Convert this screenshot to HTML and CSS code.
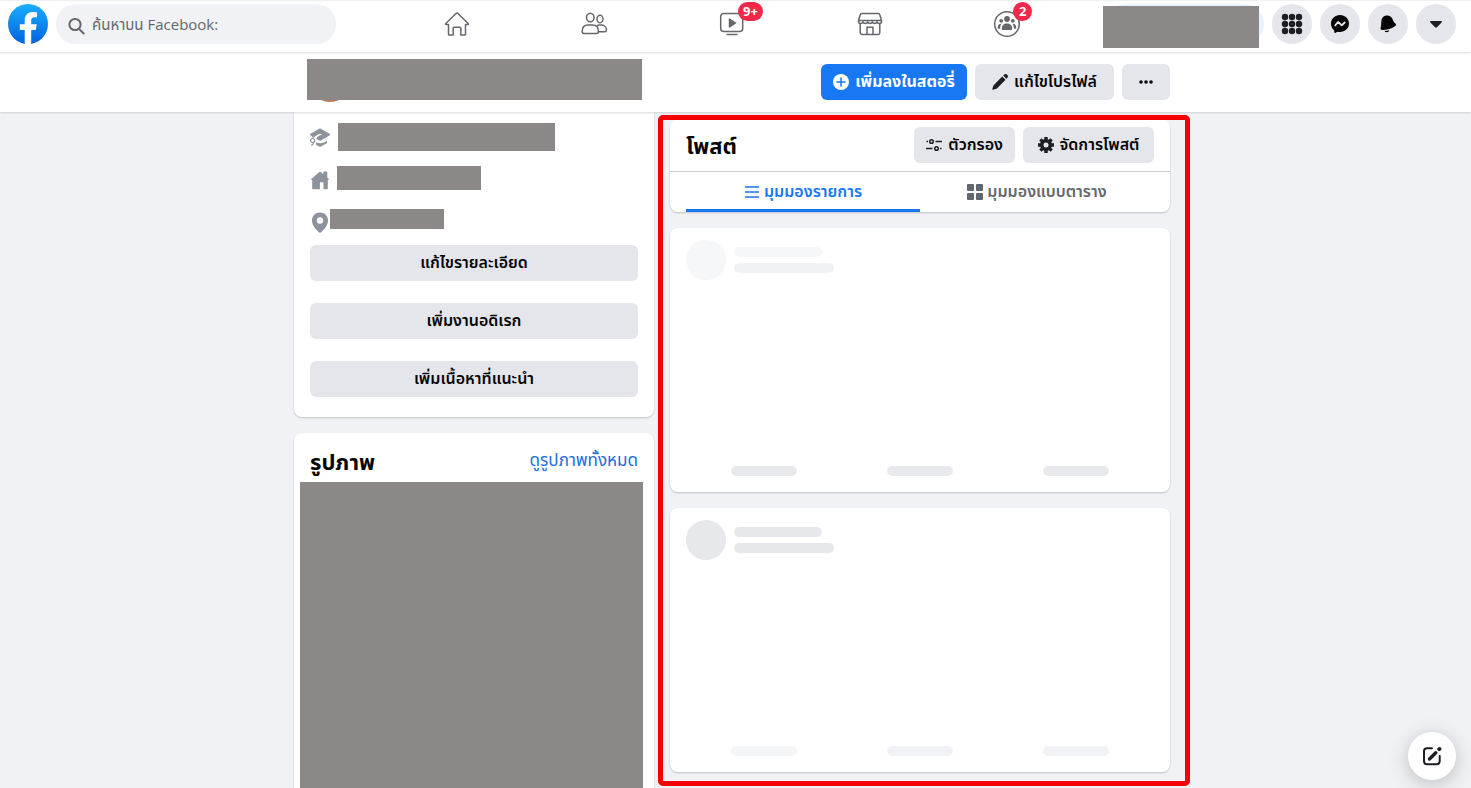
FILE: index.html
```
<!DOCTYPE html>
<html lang="th">
  <head>
    <meta charset="utf-8">
    <title>Facebook</title>
    <link rel="stylesheet" href="styles.css">
  </head>
  <body>
    <header class="topbar">
      <div class="topbar-left">
        <a class="logo" href="#" aria-label="Facebook">
          <svg width="40" height="40" viewBox="0 0 40 40">
            <defs>
              <linearGradient id="blue" x1="0" y1="0" x2="0" y2="1">
                <stop offset="0" stop-color="#19afff"/>
                <stop offset="1" stop-color="#0062e0"/>
              </linearGradient>
            </defs>
            <circle cx="20" cy="20" r="20" fill="url(#blue)"/>
            <path fill="#fff" d="M16.7 39.8V26h-4.9v-5.800h4.900v-3.600C16.700 11 19.800 8 24.700 8c1.600 0 3 .1 4.300.4v4.900h-2.500c-2.500 0-3.300 1.400-3.300 3.200v3.700h5.600L27.700 26h-4.500v13.800c-2.100.3-4.400.3-6.500 0z"/>
          </svg>
        </a>
        <label class="search">
          <svg width="18" height="18" viewBox="0 0 18 18" fill="none" stroke="#65676b" stroke-width="2">
            <circle cx="7" cy="7.500" r="5.600"/>
            <path d="M11.200 12l4.500 4.500" stroke-linecap="round"/>
          </svg>
          <input type="text" aria-label="ค้นหา" placeholder="ค้นหาบน Facebook:">
        </label>
      </div>
      <nav class="tabs-main">
        <a href="#" aria-label="Home">
          <svg width="28" height="28" viewBox="0 0 28 28" class="line">
            <path d="M5.500 14.500H3.200c-.8 0-.9-.6-.4-1L13 3.500c.6-.6 1.400-.6 2 0l10.200 10c.5.4.4 1-.4 1h-2.300v9.800c0 .5-.3.800-.8.800h-3.900v-7c0-.5-.3-.8-.8-.8h-6c-.5 0-.8.3-.8.8v7H6.300c-.5 0-.8-.3-.8-.8z"/>
          </svg>
        </a>
        <a href="#" aria-label="Friends">
          <svg width="28" height="28" viewBox="0 0 28 28" class="line">
            <ellipse cx="10.300" cy="7.500" rx="3.800" ry="4.300"/>
            <ellipse cx="20" cy="9" rx="3" ry="3.700"/>
            <path d="M2.200 21.500c0-4.400 2.700-6.500 5.800-6.500h4.600c3.100 0 5.800 2.100 5.800 6.500 0 1.200-.7 1.900-1.700 1.900H3.900c-1 0-1.700-.7-1.700-1.900z"/>
            <path d="M16.800 15.700c.8-.4 1.600-.6 2.500-.6h1.800c2.800 0 5.300 1.800 5.300 4.800 0 1.200-.6 1.800-1.600 1.800h-6.300"/>
          </svg>
        </a>
        <a href="#" aria-label="Watch">
          <svg width="28" height="28" viewBox="0 0 28 28" class="line">
            <rect x="2.700" y="3.500" width="22" height="18" rx="3"/>
            <path d="M8.500 24.500h11"/>
            <path d="M11.500 9v8l6-4z" fill="#65676b"/>
          </svg>
          <span class="badge">9+</span>
        </a>
        <a href="#" aria-label="Marketplace">
          <svg width="28" height="28" viewBox="0 0 28 28" class="line">
            <path d="M2.500 10.500l1.700-5.800c.2-.8.8-1.200 1.600-1.200h16.400c.8 0 1.400.4 1.600 1.200l1.700 5.800H2.500v1c0 2.600 3.800 2.600 4.600.4.800 2.200 3.800 2.200 4.600 0 .8 2.200 3.800 2.200 4.600 0 .8 2.200 3.800 2.200 4.600 0 .8 2.200 4.600 2.200 4.600-.4v-1"/>
            <path d="M4.200 13.500v9.300c0 1 .7 1.700 1.700 1.700h16.200c1 0 1.700-.7 1.700-1.700v-9.300M11 24.500v-7.200h6v7.200"/>
          </svg>
        </a>
        <a href="#" aria-label="Groups">
          <svg width="28" height="28" viewBox="0 0 28 28" class="line">
            <circle cx="14" cy="14" r="12.300"/>
            <g fill="#65676b" stroke="none">
              <circle cx="14" cy="9" r="2.900"/>
              <circle cx="8.200" cy="10.800" r="1.900"/>
              <circle cx="19.800" cy="10.800" r="1.900"/>
              <path d="M8.800 18.800c0-3.200 1.800-5.300 5.200-5.300s5.200 2.100 5.200 5.300c0 .8-.5 1.200-1.200 1.200h-8c-.7 0-1.200-.4-1.200-1.200zM8.500 13.800c-1 1.300-1.400 3-1.400 4.900H5.600c-.6 0-.9-.3-.9-.9 0-2.500 1.200-4.300 3.800-4zM19.500 13.800c1 1.300 1.400 3 1.400 4.900h1.500c.6 0 .9-.3.9-.9 0-2.500-1.200-4.300-3.800-4z"/>
            </g>
          </svg>
          <span class="badge">2</span>
        </a>
      </nav>
      <div class="topbar-right">
        <a class="me" href="#" aria-label="Profile"><span class="mask"></span></a>
        <button class="round" aria-label="Menu">
          <svg width="20" height="20" viewBox="0 0 20 20" fill="#1c1e21">
            <circle cx="3" cy="3" r="3.200"/><circle cx="10" cy="3" r="3.200"/><circle cx="17" cy="3" r="3.200"/>
            <circle cx="3" cy="10" r="3.200"/><circle cx="10" cy="10" r="3.200"/><circle cx="17" cy="10" r="3.200"/>
            <circle cx="3" cy="17" r="3.200"/><circle cx="10" cy="17" r="3.200"/><circle cx="17" cy="17" r="3.200"/>
          </svg>
        </button>
        <button class="round" aria-label="Messenger">
          <svg width="20" height="20" viewBox="0 0 20 20">
            <path fill="#050505" d="M10 1c5 0 9 3.700 9 8.600s-4 8.500-9 8.500c-.9 0-1.700-.1-2.500-.3l-2.300 1.100c-.5.200-.9-.1-.9-.6l-.1-1.800C2.200 14.900 1 12.400 1 9.600 1 4.700 5 1 10 1z"/>
            <path fill="none" stroke="#e4e6eb" stroke-width="1.800" stroke-linejoin="round" d="M4.800 12l3.200-4 3.800 3.300L15.200 8"/>
          </svg>
        </button>
        <button class="round" aria-label="Notifications">
          <svg width="20" height="20" viewBox="0 0 20 20" fill="#050505">
            <path d="M3.400 6.800C3.700 3.600 6 1.500 9 1.500c2.800 0 4.500 1.300 5.500 3.600.9 2.200 1.300 3.300 2.900 4.500.8.600.8 1.800 0 2.400-3.700 2.600-8.400 3.900-13.200 3.900-1.200 0-1.900-.9-1.600-2 .6-2.100.6-4.500.8-7.100z"/>
            <path d="M6.500 17c1.600 0 3.200-.3 4.800-.8-.4 1.300-1.300 2-2.400 2-1 0-1.900-.4-2.400-1.200z"/>
          </svg>
        </button>
        <button class="round" aria-label="Account">
          <svg width="20" height="20" viewBox="0 0 20 20" fill="#1c1e21">
            <path d="M5 7h10c1 0 1.300.9.600 1.600l-4.700 4.700c-.5.500-1.300.5-1.800 0L4.400 8.600C3.700 7.900 4 7 5 7z"/>
          </svg>
        </button>
      </div>
    </header>

    <div class="profilebar">
      <div class="wrap profilebar-inner">
        <div class="who"><span class="avatar"></span><span class="mask"></span></div>
        <div class="actions">
          <button class="btn primary">
            <svg width="16" height="16" viewBox="0 0 16 16">
              <circle cx="8" cy="8" r="8" fill="#fff"/>
              <path d="M8 4v8M4 8h8" stroke="#1877f2" stroke-width="1.500" stroke-linecap="round"/>
            </svg>
            เพิ่มลงในสตอรี่
          </button>
          <button class="btn edit">
            <svg width="16" height="16" viewBox="0 0 16 16" fill="#1c1e21">
              <path d="M10.200 2.400l3.400 3.400-8.700 8.600c-.2.200-.4.300-.7.400l-3.200 1c-.4.100-.8-.3-.7-.7l1-3.100c.1-.3.200-.5.400-.7zM11.200 1.500L12.300.6c.8-.8 2-.8 2.800 0l.3.300c.8.8.8 2 0 2.800l-1 1.100z"/>
            </svg>
            แก้ไขโปรไฟล์
          </button>
          <button class="btn" aria-label="More">
            <svg width="16" height="16" viewBox="0 0 16 16" fill="#050505">
              <circle cx="3" cy="8" r="1.800"/><circle cx="8" cy="8" r="1.800"/><circle cx="13" cy="8" r="1.800"/>
            </svg>
          </button>
        </div>
      </div>
    </div>

    <main class="wrap columns">
      <aside class="side">
        <section class="card intro">
          <div class="fact school">
            <svg width="20" height="24" viewBox="0 0 20 24" fill="#8c939d">
              <path d="M9.200 3.800c.5-.3 1.100-.3 1.600 0l8.700 4.900c.7.400.7 1.300 0 1.700l-8.700 5c-.5.300-1.100.3-1.600 0l-3-1.600c1-2.300 2.600-3.300 4.900-3.700.9-.2.700-1.200-.3-1.200-3 .1-5 1.300-6.300 3.300L.5 10.400c-.7-.4-.7-1.300 0-1.700z"/>
              <path d="M6 17.200c4 1.700 7.500 1.200 11-1.700v2c0 .5-.2.900-.6 1.100l-5.500 3c-.6.300-1.200.3-1.800 0L6 19.800z"/>
              <path d="M3 10v3" fill="none" stroke="#8c939d" stroke-width="1.200"/>
              <circle cx="2.600" cy="15.500" r="2" fill="none" stroke="#8c939d" stroke-width="1.200"/>
              <path d="M3.500 17.500c0 1.500-.8 2.500-2.300 2.700" fill="none" stroke="#8c939d" stroke-width="1.200"/>
            </svg>
            <span class="mask"></span>
          </div>
          <div class="fact home">
            <svg width="20" height="24" viewBox="0 0 20 24" fill="#8c939d">
              <path d="M9 6.300c.6-.5 1.400-.5 2 0l2.300 2V6.200c0-.5.300-.8.800-.8h2.400c.5 0 .8.300.8.800v5.500l1.300 1.200c.5.500.3 1.100-.4 1.100h-.4v8.500c0 .5-.3.800-.8.800h-3.500V17c0-.5-.3-.8-.8-.8h-2c-.5 0-.8.300-.8.800v6.300H3c-.5 0-.8-.3-.8-.8V14h-.4c-.7 0-.9-.6-.4-1.100z"/>
            </svg>
            <span class="mask"></span>
          </div>
          <div class="fact place">
            <svg width="20" height="28" viewBox="0 0 20 28" fill="#8c939d" fill-rule="evenodd">
              <path d="M10 7.500c4.600 0 8 3.500 8 7.900 0 4.700-3.600 8.700-6.800 11.800-.7.700-1.700.7-2.400 0C5.600 24.100 2 20.100 2 15.400 2 11 5.400 7.500 10 7.500zm0 4.800a3.200 3.200 0 1 0 0 6.400 3.200 3.200 0 0 0 0-6.400z"/>
            </svg>
            <span class="mask"></span>
          </div>
          <div class="intro-buttons">
            <button class="btn">แก้ไขรายละเอียด</button>
            <button class="btn">เพิ่มงานอดิเรก</button>
            <button class="btn">เพิ่มเนื้อหาที่แนะนำ</button>
          </div>
        </section>
        <section class="card photos">
          <div class="photos-head">
            <h2>รูปภาพ</h2>
            <a href="#">ดูรูปภาพทั้งหมด</a>
          </div>
          <div class="mask"></div>
        </section>
      </aside>

      <div class="feed">
        <section class="card">
          <div class="posts-head">
            <h2>โพสต์</h2>
            <button class="btn filter">
              <svg width="16" height="16" viewBox="0 0 16 16" fill="none" stroke="#1c1e21" stroke-width="1.500">
                <circle cx="5.500" cy="4.500" r="1.800"/><path d="M9.500 4.500H16M.5 4.500H2"/>
                <circle cx="10.500" cy="11.500" r="1.800"/><path d="M0 11.500h6.500M14 11.500h1.500"/>
              </svg>
              ตัวกรอง
            </button>
            <button class="btn manage">
              <svg width="16" height="16" viewBox="0 0 16 16">
                <circle cx="8" cy="8" r="4.300" fill="none" stroke="#1c1e21" stroke-width="3.600"/>
                <path stroke="#1c1e21" stroke-width="3.400" d="M8 0v3M8 13v3M0 8h3M13 8h3M2.400 2.400l2 2M11.600 11.600l2 2M2.400 13.600l2-2M11.600 4.400l2-2"/>
              </svg>
              จัดการโพสต์
            </button>
          </div>
          <nav class="views">
            <a class="active" href="#">
              <svg width="16" height="16" viewBox="0 0 16 16" stroke="#1877f2" stroke-width="1.500">
                <path d="M1 3h14M1 8h14M1 13h14"/>
              </svg>
              มุมมองรายการ
            </a>
            <a href="#">
              <svg width="16" height="16" viewBox="0 0 16 16" fill="#606770">
                <rect width="7" height="7" rx="1"/><rect x="9" width="7" height="7" rx="1"/>
                <rect y="9" width="7" height="7" rx="1"/><rect x="9" y="9" width="7" height="7" rx="1"/>
              </svg>
              มุมมองแบบตาราง
            </a>
          </nav>
        </section>

        <section class="card skeleton first">
          <div class="sk-head">
            <span class="sk-face"></span>
            <span class="sk-lines"><i></i><i></i></span>
          </div>
          <div class="sk-foot"><i></i><i></i><i></i></div>
        </section>
        <section class="card skeleton second">
          <div class="sk-head">
            <span class="sk-face"></span>
            <span class="sk-lines"><i></i><i></i></span>
          </div>
          <div class="sk-foot"><i></i><i></i><i></i></div>
        </section>
        <div class="frame"></div>
      </div>
    </main>

    <button class="compose" aria-label="New message">
      <svg width="20" height="20" viewBox="0 0 20 20" fill="none" stroke="#1c1e21" stroke-linecap="round">
        <path stroke-width="2" d="M10 2.300H5C3 2.300 2 3.500 2 5.300V15c0 2 1.200 3.200 3 3.200h9.500c2 0 3.200-1.200 3.200-3.200v-5"/>
        <path stroke-width="3.400" d="M7.500 13l6.300-6.300"/>
        <path stroke-width="3.800" d="M17.200 3.200l.3-.3"/>
      </svg>
    </button>
  </body>
</html>
```

FILE: styles.css
```
* {
  box-sizing: border-box;
}

body {
  margin: 0;
  min-height: 100vh;
  display: flex;
  flex-direction: column;
  background: #f0f2f5;
  color: #050505;
  font-family: "Open Sans", "Noto Sans", "Noto Sans Thai", sans-serif;
  font-size: 15px;
}

a {
  color: inherit;
  text-decoration: none;
}

button,
input {
  font: inherit;
  border: 0;
}

svg {
  display: block;
  flex: none;
}

h2 {
  margin: 0;
  font-size: 22px;
  line-height: 24px;
}

.mask {
  display: block;
  background: #8c8888;
}

/* top bar */
.topbar {
  position: relative;
  z-index: 2;
  display: grid;
  grid-template-columns: 1fr 688px 1fr;
  height: 52px;
  padding: 3px 15px 8px 8px;
  border-top: 1px solid #f0f0f1;
  background: #fff;
  box-shadow: 0 1px 2px rgba(0, 0, 0, 0.15);
}

.topbar-left,
.topbar-right {
  display: flex;
  gap: 8px;
}

.topbar-right {
  justify-content: flex-end;
}

.logo {
  height: 40px;
}

.search {
  display: flex;
  align-items: center;
  gap: 6px;
  width: 280px;
  height: 40px;
  padding: 4px 12px 0;
  border-radius: 20px;
  background: #f0f2f5;
}

.search input {
  flex: 1;
  min-width: 0;
  padding: 0 0 4px;
  background: none;
  outline: 0;
}

.search input::placeholder {
  color: #65676b;
  opacity: 1;
}

.tabs-main {
  display: grid;
  grid-template-columns: repeat(5, 1fr);
  height: 40px;
}

.tabs-main a {
  position: relative;
  display: flex;
  align-items: center;
  justify-content: center;
}

.line {
  fill: none;
  stroke: #65676b;
  stroke-width: 1.5;
  stroke-linejoin: round;
}

.badge {
  position: absolute;
  top: -2px;
  left: calc(50% + 6px);
  min-width: 19px;
  padding: 0 5px;
  border-radius: 10px;
  background: #f02849;
  color: #fff;
  font-size: 13px;
  font-weight: 700;
  line-height: 19px;
  text-align: center;
}

.round {
  display: flex;
  align-items: center;
  justify-content: center;
  width: 40px;
  height: 40px;
  padding: 0;
  border-radius: 50%;
  background: #e4e6eb;
}

.round svg {
  overflow: visible;
}

.me {
  position: relative;
  width: 158px;
  height: 40px;
  border-radius: 20px;
  background: #e7f3ff;
}

.me .mask {
  position: absolute;
  top: 2px;
  left: -3px;
  width: 156px;
  height: 42px;
}

/* profile bar */
.profilebar {
  position: relative;
  z-index: 1;
  height: 60px;
  padding-right: 7px;
  background: #fff;
  box-shadow: 0 1px 2px rgba(0, 0, 0, 0.15);
}

.wrap {
  width: 100%;
  max-width: 876px;
  margin: 0 auto;
}

.profilebar-inner {
  display: flex;
  justify-content: space-between;
  padding: 7px 0 0 13px;
}

.who {
  position: relative;
}

.who .mask {
  position: relative;
  width: 335px;
  height: 41px;
}

.avatar {
  position: absolute;
  top: 3px;
  left: 3px;
  width: 40px;
  height: 40px;
  border-radius: 50%;
  background: #b98058;
}

.actions {
  display: flex;
  gap: 8px;
  padding-top: 5px;
}

.btn {
  display: flex;
  align-items: center;
  justify-content: center;
  gap: 6px;
  height: 36px;
  padding: 0 12px;
  border-radius: 6px;
  background: #e4e6eb;
  color: #050505;
  font-size: 16px;
  font-weight: 600;
  white-space: nowrap;
}

.actions .btn:last-child {
  padding: 0 16px;
}

.btn.primary {
  min-width: 146px;
  background: #1877f2;
  color: #fff;
  font-weight: 700;
}

.btn.edit {
  min-width: 139px;
}

.btn.filter {
  min-width: 100px;
}

.btn.manage {
  min-width: 131px;
}

/* columns */
.columns {
  flex: 1;
  display: grid;
  grid-template-columns: 360px 1fr;
  gap: 16px;
  max-width: 883px;
  padding-right: 7px;
}

.card {
  border-radius: 8px;
  background: #fff;
  box-shadow: 0 1px 2px rgba(0, 0, 0, 0.2);
}

.side {
  display: flex;
  flex-direction: column;
  gap: 16px;
}

.intro {
  padding: 4px 16px 20px;
  border-radius: 0 0 8px 8px;
}

.fact {
  display: flex;
  align-items: center;
  gap: 8px;
  height: 41px;
}

.school .mask {
  width: 217px;
  height: 28px;
}

.home {
  gap: 7px;
}

.home .mask {
  width: 144px;
  height: 24px;
}

.place {
  gap: 0;
}

.place .mask {
  width: 114px;
  height: 20px;
}

.intro-buttons {
  display: grid;
  gap: 22px;
  padding-top: 6px;
}

.photos {
  flex: 1;
  display: flex;
  flex-direction: column;
  padding: 0 11px 0 6px;
  border-radius: 8px 8px 0 0;
}

.photos-head {
  display: flex;
  align-items: center;
  justify-content: space-between;
  height: 49px;
  padding: 6px 5px 0 10px;
}

.photos-head a {
  color: #216fdb;
  font-size: 17px;
}

.photos .mask {
  flex: 1;
}

.feed {
  position: relative;
  display: flex;
  flex-direction: column;
  gap: 16px;
  padding: 7px 0 16px;
}

.posts-head {
  display: flex;
  gap: 8px;
  padding: 8px 16px;
  border-bottom: 1px solid #ced0d4;
}

.posts-head h2 {
  flex: 1;
  line-height: 36px;
}

.views {
  display: grid;
  grid-template-columns: 1fr 1fr;
  height: 40px;
  padding: 0 16px;
  color: #65676b;
  font-size: 16px;
  font-weight: 600;
}

.views a {
  display: flex;
  align-items: center;
  justify-content: center;
  gap: 4px;
  border-bottom: 3px solid transparent;
  padding-top: 3px;
}

.views .active {
  border-color: #1877f2;
  color: #1877f2;
}

/* loading posts */
.skeleton {
  display: flex;
  flex-direction: column;
  justify-content: space-between;
  height: 264px;
  padding: 12px 16px 16px;
}

.skeleton i {
  display: block;
  height: 10px;
  border-radius: 5px;
  background: #f0f2f5;
}

.sk-head {
  display: flex;
  align-items: center;
  gap: 8px;
}

.sk-face {
  width: 40px;
  height: 40px;
  border-radius: 50%;
  background: #f6f7f9;
}

.sk-lines {
  display: grid;
  gap: 6px;
}

.sk-lines i {
  width: 100px;
}

.sk-lines i:first-child {
  width: 88px;
  background: #f6f7f9;
}

.sk-foot {
  display: grid;
  grid-template-columns: repeat(3, 1fr);
  justify-items: center;
}

.sk-foot i {
  width: 66px;
}

.first .sk-foot i {
  background: #e8e9ed;
}

.second .sk-face,
.second .sk-lines i {
  background: #e6e8ec;
}

.second .sk-foot i:first-child {
  background: #f4f5f7;
}

.frame {
  position: absolute;
  top: 3px;
  right: -20px;
  bottom: 2px;
  left: -12px;
  border: 5px solid #f40000;
  border-radius: 5px;
  pointer-events: none;
}

.compose {
  position: fixed;
  right: 15px;
  bottom: 8px;
  display: flex;
  align-items: center;
  justify-content: center;
  width: 48px;
  height: 48px;
  padding: 0;
  border-radius: 50%;
  background: #fff;
  box-shadow: 0 4px 20px rgba(0, 0, 0, 0.22);
}
```
